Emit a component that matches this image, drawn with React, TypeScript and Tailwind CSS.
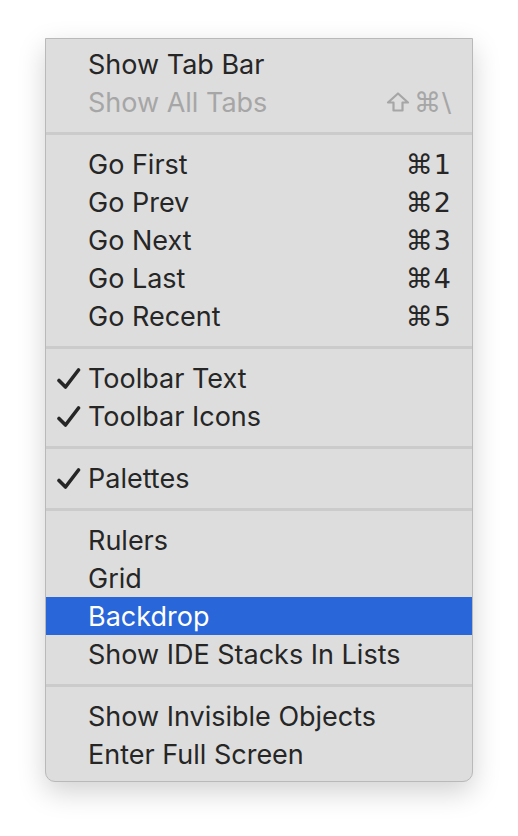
type Item = {
  label?: string;
  shortcut?: string;
  shift?: boolean;
  checked?: boolean;
  disabled?: boolean;
  active?: boolean;
  sep?: boolean;
};

const items: Item[] = [
  { label: "Show Tab Bar" },
  { label: "Show All Tabs", shortcut: "⌘\\", shift: true, disabled: true },
  { sep: true },
  { label: "Go First", shortcut: "⌘1" },
  { label: "Go Prev", shortcut: "⌘2" },
  { label: "Go Next", shortcut: "⌘3" },
  { label: "Go Last", shortcut: "⌘4" },
  { label: "Go Recent", shortcut: "⌘5" },
  { sep: true },
  { label: "Toolbar Text", checked: true },
  { label: "Toolbar Icons", checked: true },
  { sep: true },
  { label: "Palettes", checked: true },
  { sep: true },
  { label: "Rulers" },
  { label: "Grid" },
  { label: "Backdrop", active: true },
  { label: "Show IDE Stacks In Lists" },
  { sep: true },
  { label: "Show Invisible Objects" },
  { label: "Enter Full Screen" },
];

function Check() {
  return (
    <svg width="24" height="22" viewBox="0 0 24 22" className="absolute left-[11px] top-[9px]">
      <path d="M2 12.5 L8.5 19 L21.5 2" fill="none" stroke="currentColor" strokeWidth="3.6" strokeLinecap="round" strokeLinejoin="round" />
    </svg>
  );
}

function ShiftGlyph() {
  return (
    <svg width="24" height="20" viewBox="0 0 24 20" className="mr-[4px]">
      <path d="M12 1.5 L22 10.5 H16.5 V18.5 H7.5 V10.5 H2 Z" fill="none" stroke="currentColor" strokeWidth="2.2" strokeLinejoin="round" />
    </svg>
  );
}

function Row({ item }: { item: Item }) {
  const color = item.active
    ? "bg-[#2866d9] text-white"
    : item.disabled
    ? "text-[#a6a6a6]"
    : "text-[#262626]";
  return (
    <div className={`relative flex h-[38px] items-center justify-between pl-[42px] pr-[20px] ${color}`}>
      {item.checked && <Check />}
      <span>{item.label}</span>
      {item.shortcut && (
        <span className="flex items-center font-['DejaVu_Sans','Inter',sans-serif] text-[27px] tracking-[1px]">
          {item.shift && <ShiftGlyph />}
          {item.shortcut}
        </span>
      )}
    </div>
  );
}

export default function App() {
  return (
    <div className="min-h-[836px] w-[518px] bg-white pt-[38px] pl-[45px]">
      <div className="w-[428px] rounded-b-[10px] border border-[#b9b9b9] bg-[#dddddd] pt-[6px] pb-[8px] font-['Inter','Liberation_Sans',sans-serif] text-[27px] leading-none shadow-[0_10px_28px_rgba(0,0,0,0.18)]">
        {items.map((item, i) =>
          item.sep ? (
            <div key={i} className="pt-[11px] pb-[10px]">
              <div className="h-[3px] bg-[#cbcbcb]" />
            </div>
          ) : (
            <Row key={i} item={item} />
          )
        )}
      </div>
    </div>
  );
}
